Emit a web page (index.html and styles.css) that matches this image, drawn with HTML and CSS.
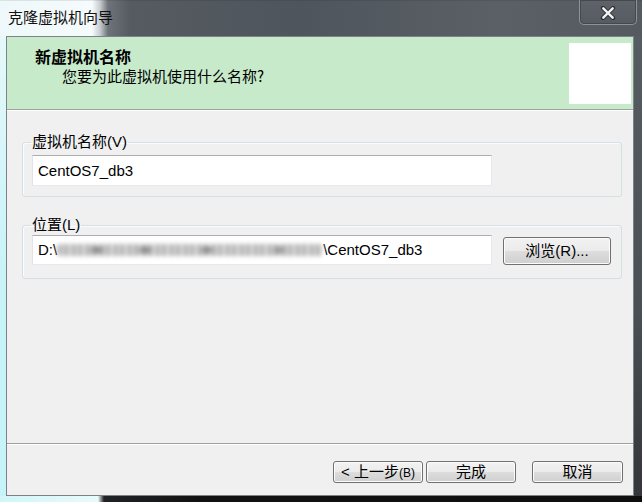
FILE: index.html
```html
<!DOCTYPE html>
<html lang="zh-CN">
<head>
<meta charset="utf-8">
<title>克隆虚拟机向导</title>
<link rel="stylesheet" href="styles.css">
</head>
<body>
<div class="window">
  <div class="titlebar">
    <span class="title">克隆虚拟机向导</span>
    <div class="close">
      <svg width="16" height="14" viewBox="0 0 16 14">
        <path d="M3 2 L13 12 M13 2 L3 12" stroke="#2a2e33" stroke-width="4.2" stroke-linecap="round"/>
        <path d="M3.3 2.3 L12.7 11.7 M12.7 2.3 L3.3 11.7" stroke="#f2f2f2" stroke-width="2.4" stroke-linecap="round"/>
      </svg>
    </div>
  </div>
  <div class="middle">
    <div class="frame-l"></div>
    <div class="client">
      <div class="header">
        <div class="header-text">
          <div class="h-title">新虚拟机名称</div>
          <div class="h-sub">您要为此虚拟机使用什么名称?</div>
        </div>
        <div class="logo-box"></div>
      </div>
      <div class="body">
        <fieldset class="group g1">
          <legend>虚拟机名称(V)</legend>
          <div class="textbox tb1">CentOS7_db3</div>
        </fieldset>
        <fieldset class="group g2">
          <legend>位置(L)</legend>
          <div class="row">
            <div class="textbox tb2">D:\<span class="blur" aria-hidden="true"></span>\CentOS7_db3</div>
            <button class="btn browse">浏览(R)...</button>
          </div>
        </fieldset>
      </div>
      <div class="footer">
        <button class="btn back">&lt; 上一步<span class="acc">(B)</span></button>
        <button class="btn finish">完成</button>
        <button class="btn cancel">取消</button>
      </div>
    </div>
    <div class="frame-r"></div>
  </div>
  <div class="frame-b"></div>
</div>
</body>
</html>
```
FILE: styles.css
```css
html, body {
  margin: 0;
  padding: 0;
  background: #000;
}
.window {
  width: 642px;
  height: 502px;
  display: flex;
  flex-direction: column;
  font-family: "Liberation Sans", "Noto Sans CJK SC", sans-serif;
  font-size: 15px;
  color: #000;
  overflow: hidden;
}
.titlebar {
  height: 36px;
  flex: none;
  display: flex;
  align-items: flex-start;
  background:
    linear-gradient(to bottom, rgba(0,0,0,0.18) 0, rgba(0,0,0,0) 1px),
    linear-gradient(to right, #eef8fa 0, #f6fbfc 92px, #c8ccd0 100px, #6e7379 108px, #565b62 130px, #4f555c 300px, #5b6067 500px, #555a61 642px);
}
.title {
  margin-left: 8px;
  line-height: 34px;
  color: #111;
  font-size: 15px;
  font-family: "Noto Sans CJK SC", sans-serif;
}
.close {
  margin-left: auto;
  margin-right: 5px;
  width: 56px;
  height: 24px;
  border: 1px solid #8d9298;
  border-top: none;
  border-radius: 0 0 5px 5px;
  background: linear-gradient(to bottom, #5e636a, #565b61);
  box-shadow: inset 0 0 0 1px #44494f;
  display: flex;
  align-items: center;
  justify-content: center;
}
.close svg { display: block; margin-top: 1px; }
.middle {
  height: 460px;
  flex: none;
  display: flex;
}
.frame-l {
  width: 6px;
  background: linear-gradient(to bottom, #e6f8fa, #c8f4f8 50%, #c6f4f8);
}
.frame-r {
  width: 8px;
  background: linear-gradient(to bottom, #575c63, #4a4f55 60%, #33373b);
}
.frame-b {
  height: 6px;
  flex: none;
  background: linear-gradient(to right, #d2f6f8 0, #e8fafb 98px, #202224 104px, #111 200px, #0e0e0e 642px);
}
.client {
  width: 628px;
  box-sizing: border-box;
  border: 1px solid #7d8288;
  background: #f0f0f0;
  display: flex;
  flex-direction: column;
}
.header {
  height: 72px;
  flex: none;
  background: #c7ebca;
  border-bottom: 1px solid #a0a0a0;
  box-shadow: 0 1px 0 #ffffff;
  display: flex;
  align-items: flex-start;
  justify-content: space-between;
}
.header-text {
  padding: 10px 0 0 28px;
  font-family: "Noto Sans CJK SC", sans-serif;
}
.h-title {
  font-weight: bold;
  font-size: 16px;
  line-height: 19px;
}
.h-sub {
  padding-left: 27px;
  font-size: 15px;
  line-height: 20px;
}
.logo-box {
  width: 62px;
  height: 61px;
  margin: 6px 2px 0 0;
  background: #ffffff;
}
.body {
  flex: 1;
  padding: 24px 11px 0 15px;
  display: flex;
  flex-direction: column;
}
.group {
  margin: 0;
  border: 1px solid #d5dfe5;
  border-radius: 3px;
  box-shadow: inset 1px 1px 0 #fafbfc;
  padding: 0 10px 0 9px;
  min-width: 0;
}
.group legend {
  padding: 0 1px;
  margin-left: -1px;
  line-height: 16px;
  font-family: "Liberation Sans", "Noto Sans CJK SC", sans-serif;
}
.g1 { padding-top: 5px; padding-bottom: 10px; }
.g2 { margin-top: 20px; padding-top: 2px; padding-bottom: 13px; }
.row {
  display: flex;
  align-items: flex-end;
  gap: 11px;
}
.textbox {
  width: 460px;
  box-sizing: border-box;
  background: #fff;
  border: 1px solid #e3e9ef;
  border-top-color: #abadb3;
  border-left-color: #e2e3ea;
  padding-left: 5px;
  white-space: nowrap;
  overflow: hidden;
}
.tb1 { height: 31px; line-height: 29px; }
.tb2 { height: 30px; line-height: 27px; }
.blur {
  display: inline-block;
  width: 266px;
  height: 12px;
  margin-top: 8px;
  vertical-align: top;
  filter: blur(2px);
  background:
    radial-gradient(ellipse 9px 5px at 40px 6px, #777 0, transparent 100%),
    radial-gradient(ellipse 9px 5px at 88px 6px, #777 0, transparent 100%),
    radial-gradient(ellipse 8px 5px at 150px 6px, #777 0, transparent 100%),
    radial-gradient(ellipse 8px 5px at 222px 6px, #888 0, transparent 100%),
    repeating-linear-gradient(to right, #b8b8b8 0, #b8b8b8 5px, #d6d6d6 5px, #d6d6d6 8px, #a8a8a8 8px, #a8a8a8 11px, #e4e4e4 11px, #e4e4e4 14px);
  background-repeat: no-repeat;
  background-size: 100% 100%;
  border-radius: 4px;
}
.btn {
  font-family: "Liberation Sans", "Noto Sans CJK SC", sans-serif;
  font-size: 15px;
  color: #000;
  border: 1px solid #707070;
  border-radius: 3px;
  background: linear-gradient(to bottom, #f2f2f2 0%, #ebebeb 48%, #dddddd 52%, #cfcfcf 100%);
  box-shadow: inset 0 0 0 1px #fcfcfc;
  padding: 0;
  margin: 0;
  box-sizing: border-box;
}
.browse {
  width: 108px;
  height: 28px;
  line-height: 24px;
}
.footer {
  flex: none;
  height: 52px;
  box-sizing: border-box;
  border-top: 1px solid #a0a0a0;
  box-shadow: inset 0 1px 0 #ffffff;
  padding: 17px 10px 0 0;
  display: flex;
  align-items: flex-start;
  justify-content: flex-end;
}
.footer .btn {
  height: 22px;
  line-height: 18px;
}
.back { width: 90px; }
.finish { width: 90px; margin-left: 3px; }
.cancel { width: 91px; margin-left: 16px; }
.acc { font-size: 12px; }
```
